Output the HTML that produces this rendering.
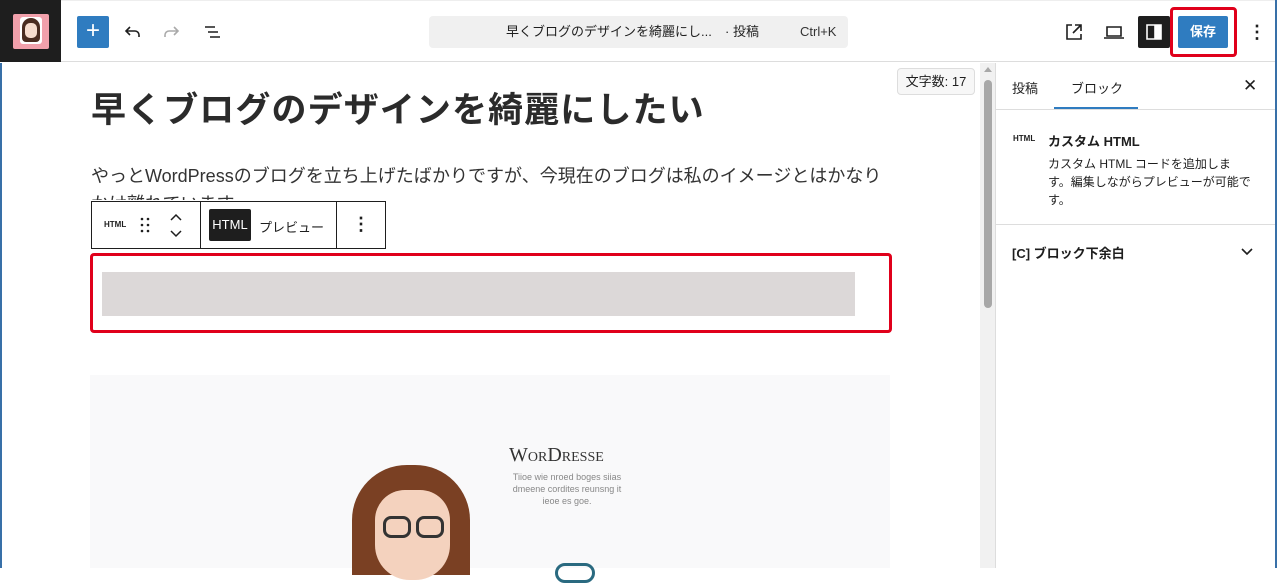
<!DOCTYPE html>
<html><head><meta charset="utf-8"><style>
*{box-sizing:border-box;margin:0;padding:0}
body{width:1277px;height:568px;overflow:hidden;background:#fff;font-family:"Liberation Sans","Noto Sans CJK JP",sans-serif;color:#1e1e1e;position:relative}
.a{position:absolute}
</style></head><body>
<!-- image -->
<div class="a" style="left:90px;top:375px;width:800px;height:193px;background:#f9f9fa"></div>
<div class="a" style="left:509px;top:444px;font-family:'Liberation Serif',serif;font-size:20px;font-variant:small-caps;color:#333">WorDresse</div>
<div class="a" style="left:508px;top:471px;width:118px;font-size:9px;color:#888;text-align:center;line-height:12px">Tiioe wie nroed boges siias dmeene cordites reunsng it ieoe es goe.</div>
<div class="a" style="left:352px;top:465px;width:118px;height:110px;background:#7a4023;border-radius:55px 55px 0 0"></div>
<div class="a" style="left:375px;top:490px;width:75px;height:90px;background:#f4d2be;border-radius:30px 30px 35px 35px"></div>
<div class="a" style="left:383px;top:516px;width:28px;height:22px;border:3px solid #333;border-radius:8px"></div>
<div class="a" style="left:416px;top:516px;width:28px;height:22px;border:3px solid #333;border-radius:8px"></div>
<div class="a" style="left:555px;top:563px;width:40px;height:20px;border:3px solid #2a6a80;border-radius:20px"></div>
<!-- top bar -->
<div class="a" style="left:0;top:0;width:1277px;height:62px;border-bottom:1px solid #ddd;border-top:1px solid #eee;background:#fff"></div>
<div class="a" style="left:0;top:0;width:61px;height:62px;background:#1e1e1e"></div>
<div class="a" style="left:13px;top:14px;width:36px;height:35px;background:#f1a0ab;border-radius:2px"></div>
<div class="a" style="left:20px;top:17px;width:22px;height:27px;background:#fff;border-radius:3px"></div>
<div class="a" style="left:22px;top:18px;width:18px;height:24px;background:#4a2c20;border-radius:9px 9px 4px 4px"></div>
<div class="a" style="left:25px;top:23px;width:12px;height:15px;background:#f6dccd;border-radius:5px"></div>
<div class="a" style="left:77px;top:16px;width:32px;height:32px;background:#2f7cc0;border-radius:2px;color:#fff;font-size:24px;line-height:30px;text-align:center">+</div>
<svg class="a" style="left:120px;top:20px" width="24" height="24" viewBox="0 0 24 24"><path d="M10 7L6 11l4 4M6 11h9a4 4 0 014 4v2" fill="none" stroke="#1e1e1e" stroke-width="1.6"/></svg>
<svg class="a" style="left:160px;top:20px" width="24" height="24" viewBox="0 0 24 24"><path d="M14 7l4 4-4 4M18 11H9a4 4 0 00-4 4v2" fill="none" stroke="#aaa" stroke-width="1.6"/></svg>
<svg class="a" style="left:201px;top:20px" width="24" height="24" viewBox="0 0 24 24"><path d="M4 7h10M7 12h10M9 17h10" fill="none" stroke="#1e1e1e" stroke-width="1.6"/></svg>
<div class="a" style="left:429px;top:16px;width:419px;height:32px;background:#f0f0f0;border-radius:4px;font-size:13px;line-height:32px">
<span class="a" style="left:77px">早くブログのデザインを綺麗にし...</span><span class="a" style="left:296px">· 投稿</span><span class="a" style="left:371px;color:#333">Ctrl+K</span></div>
<svg class="a" style="left:1063px;top:21px" width="22" height="22" viewBox="0 0 22 22"><path d="M9 4H4v14h14v-5M12 4h6v6M18 4l-8 8" fill="none" stroke="#1e1e1e" stroke-width="1.6"/></svg>
<svg class="a" style="left:1102px;top:21px" width="24" height="22" viewBox="0 0 24 22"><path d="M5 6h14v9H5zM2 17h20" fill="none" stroke="#1e1e1e" stroke-width="1.6"/></svg>
<div class="a" style="left:1138px;top:16px;width:32px;height:32px;background:#1e1e1e;border-radius:2px"></div>
<svg class="a" style="left:1145px;top:23px" width="18" height="18" viewBox="0 0 18 18"><path d="M2 2h14v14H2zM10 2v14" fill="none" stroke="#fff" stroke-width="1.6"/><rect x="10" y="2" width="6" height="14" fill="#fff"/></svg>
<div class="a" style="left:1170px;top:7px;width:67px;height:50px;border:3px solid #e0001b;border-radius:4px"></div>
<div class="a" style="left:1178px;top:16px;width:50px;height:32px;background:#2f7cc0;border-radius:2px;color:#fff;font-size:13px;font-weight:bold;line-height:32px;text-align:center">保存</div>
<div class="a" style="left:1248px;top:22px;font-size:18px;line-height:20px;font-weight:bold">⋮</div>
<!-- editor -->
<div class="a" style="left:0;top:63px;width:2px;height:505px;background:#3870a8"></div>
<div class="a" style="left:91px;top:82px;font-size:35px;font-weight:bold;color:#2b2b2b;letter-spacing:1.1px">早くブログのデザインを綺麗にしたい</div>
<div class="a" style="left:91px;top:162px;font-size:18px;color:#333;white-space:nowrap">やっとWordPressのブログを立ち上げたばかりですが、今現在のブログは私のイメージとはかなり</div>
<div class="a" style="left:91px;top:190px;font-size:18px;color:#333;height:10px;overflow:hidden;white-space:nowrap">かけ離れています。</div>
<div class="a" style="left:897px;top:68px;width:78px;height:27px;background:#f7f7f7;border:1px solid #ddd;border-radius:4px;font-size:13px;line-height:25px;text-align:center">文字数: 17</div>
<!-- toolbar -->
<div class="a" style="left:91px;top:201px;width:295px;height:48px;border:1px solid #1e1e1e;background:#fff"></div>
<div class="a" style="left:200px;top:201px;width:1px;height:48px;background:#1e1e1e"></div>
<div class="a" style="left:336px;top:201px;width:1px;height:48px;background:#1e1e1e"></div>
<div class="a" style="left:104px;top:220px;font-size:8px;font-weight:bold">HTML</div>
<svg class="a" style="left:138px;top:216px" width="14" height="18" viewBox="0 0 14 18"><g fill="#1e1e1e"><circle cx="4" cy="3" r="1.3"/><circle cx="10" cy="3" r="1.3"/><circle cx="4" cy="9" r="1.3"/><circle cx="10" cy="9" r="1.3"/><circle cx="4" cy="15" r="1.3"/><circle cx="10" cy="15" r="1.3"/></g></svg>
<svg class="a" style="left:167px;top:210px" width="18" height="30" viewBox="0 0 18 30"><path d="M4 10l5-5 5 5M4 21l5 5 5-5" fill="none" stroke="#1e1e1e" stroke-width="1.5"/></svg>
<div class="a" style="left:209px;top:209px;width:42px;height:32px;background:#1e1e1e;border-radius:2px;color:#fff;font-size:13px;line-height:32px;text-align:center">HTML</div>
<div class="a" style="left:259px;top:217px;font-size:13px">プレビュー</div>
<div class="a" style="left:352px;top:214px;font-size:18px;font-weight:bold">⋮</div>
<!-- html block -->
<div class="a" style="left:90px;top:253px;width:802px;height:80px;border:3px solid #e0001b;border-radius:4px"></div>
<div class="a" style="left:102px;top:272px;width:753px;height:44px;background:#dcd8d8"></div>
<!-- scrollbar -->
<div class="a" style="left:980px;top:63px;width:15px;height:505px;background:#f1f1f1"></div>
<div class="a" style="left:984px;top:80px;width:8px;height:228px;background:#a8a8a8;border-radius:4px"></div>
<div class="a" style="left:984px;top:67px;width:0;height:0;border:4px solid transparent;border-bottom:5px solid #a8a8a8;border-top:0"></div>
<!-- sidebar -->
<div class="a" style="left:995px;top:63px;width:1px;height:505px;background:#ddd"></div>
<div class="a" style="left:1275px;top:0;width:2px;height:568px;background:#3870a8"></div>
<div class="a" style="left:1012px;top:78px;font-size:13px">投稿</div>
<div class="a" style="left:1071px;top:78px;font-size:13px">ブロック</div>
<div class="a" style="left:1054px;top:107px;width:84px;height:2px;background:#2f7cc0"></div>
<div class="a" style="left:996px;top:109px;width:279px;height:1px;background:#ddd"></div>
<div class="a" style="left:1243px;top:76px;font-size:17px">✕</div>
<div class="a" style="left:1013px;top:134px;font-size:8px;font-weight:bold">HTML</div>
<div class="a" style="left:1048px;top:131px;font-size:13px;font-weight:bold">カスタム HTML</div>
<div class="a" style="left:1048px;top:155px;width:205px;font-size:12px;line-height:18px;color:#1e1e1e">カスタム HTML コードを追加します。編集しながらプレビューが可能です。</div>
<div class="a" style="left:996px;top:224px;width:279px;height:1px;background:#ddd"></div>
<div class="a" style="left:1012px;top:243px;font-size:13px;font-weight:bold">[C] ブロック下余白</div>
<svg class="a" style="left:1240px;top:244px" width="14" height="14" viewBox="0 0 14 14"><path d="M2 5l5 5 5-5" fill="none" stroke="#1e1e1e" stroke-width="1.6"/></svg>
</body></html>
